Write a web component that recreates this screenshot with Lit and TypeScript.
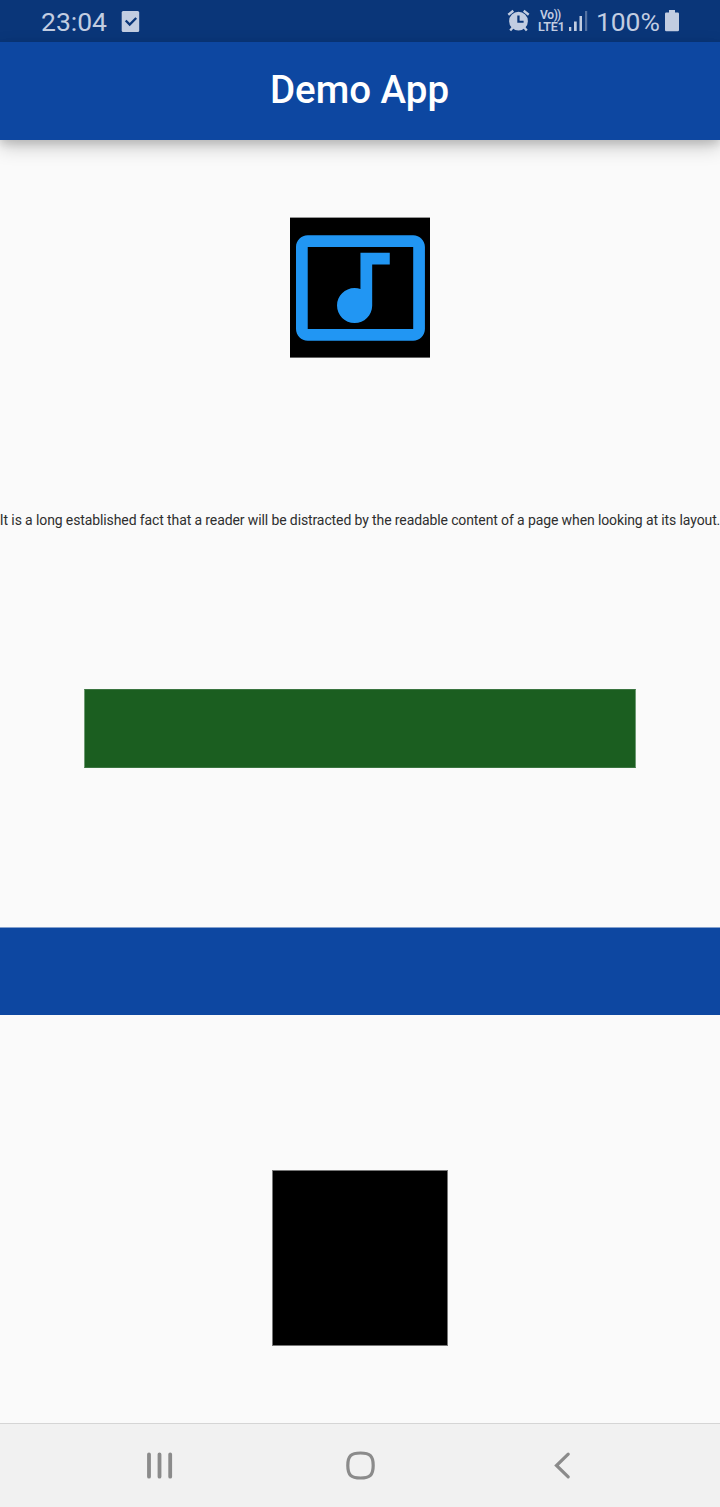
import { LitElement, html, css } from "lit";
import { customElement } from "lit/decorators.js";

@customElement("app-root")
export class AppRoot extends LitElement {
  static styles = css`
    :host {
      display: flex;
      flex-direction: column;
      height: 1507px;
      width: 720px;
      overflow: hidden;
      background: #fafafa;
      font-family: Roboto, sans-serif;
    }
    svg { display: block; flex: none; }
    .status {
      height: 42px;
      box-sizing: border-box;
      flex: none;
      display: flex;
      align-items: flex-start;
      background: #0a3679;
      color: #c2cde1;
      padding: 0 40px 0 41px;
    }
    .status svg { fill: currentColor; }
    .time, .pct { font-size: 26.5px; line-height: 40px; height: 40px; padding-top: 2px; white-space: nowrap; }
    .time { width: 80px; letter-spacing: 0; }
    .pct { width: 69px; letter-spacing: -0.1px; }
    .spacer { flex: 1; }
    .lte {
      width: 31px;
      padding-top: 10px;
      font-size: 12.5px;
      font-weight: 600;
      line-height: 11.5px;
      letter-spacing: -0.1px;
      white-space: nowrap;
    }
    .vo { padding-left: 2px; font-size: 12px; letter-spacing: -0.3px; line-height: 11px; }
    .waves { letter-spacing: -1px; }
    .bar {
      height: 98px;
      flex: none;
      background: #0d47a1;
      color: #fff;
      font-size: 38.5px;
      font-weight: 500;
      line-height: 96px;
      text-align: center;
      box-sizing: border-box;
      padding-right: 1px;
      box-shadow: 0 4px 8px rgba(0, 0, 0, 0.12), 0 7px 18px rgba(0, 0, 0, 0.2);
    }
    .content {
      flex: 1;
      display: flex;
      flex-direction: column;
      align-items: center;
      padding-top: 77px;
    }
    .caption {
      margin-top: 154px;
      height: 16px;
      font-size: 14px;
      letter-spacing: -0.111px;
      line-height: 16px;
      color: #2e2e2e;
      white-space: nowrap;
    }
    .green {
      margin-top: 161px;
      width: 552px;
      height: 79px;
      box-sizing: border-box;
      background: #1b5e20;
      border: 1px solid #3a7440;
      border-left-color: #6e9a72;
      border-right-color: #6e9a72;
    }
    .blue {
      margin-top: 159px;
      width: 720px;
      height: 88px;
      box-sizing: border-box;
      background: #0d47a1;
      border-top: 1px solid #84a1ce;
    }
    .black {
      margin-top: 155px;
      width: 176px;
      height: 176px;
      box-sizing: border-box;
      background: #000;
      border: 1px solid #777;
    }
    .nav {
      height: 84px;
      flex: none;
      box-sizing: border-box;
      border-top: 1px solid #d5d5d5;
      background: #f1f1f1;
      display: flex;
      padding-left: 59px;
      padding-right: 59px;
    }
    .nav svg {
      width: 201px;
      height: 83px;
      fill: none;
      stroke: #8b8b8b;
      stroke-linecap: round;
    }
  `;

  render() {
    return html`
      <div class="status">
        <div class="time">23:04</div>
        <svg width="20" height="42" viewBox="0 0 20 42">
          <rect x=".7" y="11" width="17.5" height="21" rx="1.5" />
          <path d="M4.700 20.500l4 4 6.500-6.500" fill="none" stroke="#0a3679" stroke-width="2.300" />
        </svg>
        <div class="spacer"></div>
        <svg width="31" height="42" viewBox="507 0 31 42">
          <path fill-rule="evenodd" d="M518.500 11.800a9.400 9.400 0 1 1 0 18.800a9.400 9.400 0 0 1 0-18.800zM517.300 15.500v7.300h6.300v-2h-4v-5.300z" />
          <path d="M508.300 14.800l5-4M528.700 14.800l-5-4M512.800 27.500l-2.600 3M524.200 27.500l2.600 3" fill="none" stroke="currentColor" stroke-width="2.400" />
        </svg>
        <div class="lte"><div class="vo">Vo<span class="waves">))</span></div><div>LTE1</div></div>
        <svg width="27" height="42" viewBox="569 0 27 42">
          <rect x="569" y="27" width="2.300" height="4" />
          <rect x="574" y="21.500" width="2.700" height="9.500" />
          <rect x="579.500" y="16" width="2.500" height="15" />
          <rect x="585" y="11" width="2.200" height="20" opacity=".4" />
        </svg>
        <div class="pct">100%</div>
        <svg width="15" height="42" viewBox="665 0 15 42">
          <path d="M669 12.500V10h6v2.500h2.700q1.300 0 1.300 1.300V30q0 1.300-1.300 1.300H666.300q-1.300 0-1.300-1.300V13.800q0-1.300 1.300-1.300z" />
        </svg>
      </div>
      <div class="bar">Demo App</div>
      <div class="content">
        <svg width="140" height="141" viewBox="0 0 140 141">
          <rect y=".6" width="140" height="140" />
          <path transform="translate(.14 .6) scale(5.86)" fill="#2196f3"
            d="M21 3H3c-1.110 0-2 .89-2 2v14c0 1.100.89 2 2 2h18c1.100 0 2-.9 2-2V5c0-1.110-.9-2-2-2zm0 16H3V5h18v14zM8 15c0-1.660 1.340-3 3-3 .35 0 .69.07 1 .18V6h5v2h-3v7.030c-.02 1.640-1.350 2.970-3 2.970-1.660 0-3-1.340-3-3z" />
        </svg>
        <div class="caption">It is a long established fact that a reader will be distracted by the readable content of a page when looking at its layout.</div>
        <div class="green"></div>
        <div class="blue"></div>
        <div class="black"></div>
      </div>
      <div class="nav">
        <svg viewBox="59 1424 201 83"><path stroke-width="3.800" d="M149 1454.300v22.400M159.500 1454.300v22.400M170.200 1454.300v22.400" /></svg>
        <svg viewBox="260 1424 201 83"><path stroke-width="3.200" d="M360.500 1453c9.500 0 12.700 3 12.700 12.500s-3.200 12.500-12.700 12.500s-12.700-3-12.700-12.500s3.200-12.500 12.700-12.500z" /></svg>
        <svg viewBox="461 1424 201 83"><path stroke-width="3.200" d="M568.200 1454.200L556.500 1465.500L568.200 1476.800" /></svg>
      </div>
    `;
  }
}
